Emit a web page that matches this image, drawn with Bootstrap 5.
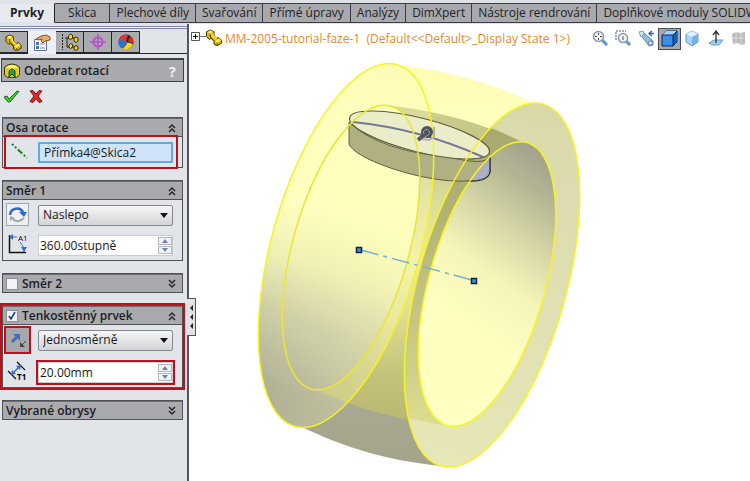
<!DOCTYPE html>
<html lang="cs">
<head>
<meta charset="utf-8">
<meta name="viewport" content="width=device-width, initial-scale=1">
<title>Odebrat rotací</title>
<link href="https://cdn.jsdelivr.net/npm/bootstrap@5.3.0/dist/css/bootstrap.min.css" rel="stylesheet">
<style>
body{font-family:"Noto Sans","Open Sans",sans-serif;font-size:12px;line-height:16px;color:#1c1c1e;background:#fff;min-height:100vh}
svg{display:block;flex:none}
button{padding:0;border:0;background:none;color:inherit}
.cmd-tabs{background:#dfe3e8;height:24px;padding-top:3px;overflow:hidden}
.cmd-tabs button{flex:none;height:20px;line-height:17px;padding:0 6px 2px;background:#a7a9ae;border:1px solid #3b3c42;border-width:1px 1px 1px 0;font-family:"Open Sans",sans-serif;color:#222}
.cmd-tabs .current{background:#e6eaee;border-color:#dfe3e8;border-right-color:#222;font-weight:700;padding:0 10px 2px}
.cmd-tabs .roomy{padding:0 13px 2px}
.side{width:189px;flex:none;background:#e1e5ea;border-right:2px solid #55575e;position:relative}
.rule{height:3px;margin-top:2px;border:1px solid #8288ad;border-width:1px 0;background:#f4f5fa}
.pm-tabs{margin-top:2px;border-bottom:1px solid #26272c;height:23px}
.pm-tabs button{width:28px;height:22px;background:#a9abaf;border:1px solid #26272c;border-left-width:0;display:flex;align-items:center;justify-content:center}
.pm-tabs .current{background:#edf1f5;height:23px;border-color:#edf1f5}
.bar{background:#a8aaae;border:1px solid #3e3f45;border-top-width:2px}
.title-bar{height:24px;margin:4px 3px 0 1px;padding:0 7px 0 2px;font-size:12px}
.title-bar .fw-semibold,.group-head{font-family:"Open Sans",sans-serif}
.help-mark{color:#eceef0;font-weight:700;font-size:15px}
.confirm{margin:7px 0 13px 3px;height:15px}
.group{width:181px;margin:0 0 12px 2px;border:1px solid #505157;background:#e1e5ea}
.group-head{height:19px;background:#a8aaae;border-bottom:1px solid #505157;border-top:1px solid #6c6d73;padding:0 6px 0 3px;font-weight:600;font-size:12px}
.group.shut .group-head{border-bottom:0;height:18px}
.line{padding:0 7px 0 35px;height:30px;position:relative}
.line .pic{position:absolute;left:3px;top:3px}
.field{height:21px;width:135px;border:1px solid #c9ccd0;background:#fff;padding:0 4px;font:12px/18px "Open Sans",sans-serif;color:#17181c;border-radius:0}
.picked{border:2px solid #62abdc;background:#cfe4f9}
.value{padding:0 1px}
.pick{position:relative;width:135px}
.pick select{appearance:none;border:1px solid #868a90;border-radius:2px;background:linear-gradient(#f6f6f7,#d3d4d6);width:100%}
.pick::after{content:"";position:absolute;right:5px;top:8px;border:4px solid transparent;border-top:5px solid #111;border-bottom:0;pointer-events:none}
.spin{position:relative}
.spin .arrows{position:absolute;right:1px;top:2px;display:grid;gap:1px}
.spin button{width:14px;height:8px;border:1px solid #b3b7bf;background:#eff1f3;display:grid;place-items:center}
.tick{appearance:none;width:12px;height:12px;margin:0;border:1px solid #8d9095;background:#f1f3f5;display:inline-block}
.tick:checked{background:#f1f3f5 url("data:image/svg+xml,%3Csvg xmlns='http://www.w3.org/2000/svg' viewBox='0 0 10 10'%3E%3Cpath d='M2 5l2 3 4-7' fill='none' stroke='%23283f86' stroke-width='1.6'/%3E%3C/svg%3E")}
.marked{outline:2px solid #b9121b}
.axis-line{height:30px;margin:0 6px 0 3px;padding-left:32px;z-index:1}
.tail{margin-top:2px}
.square{width:23px;height:23px;border:1px solid #a3a6ab;background:#eef0f3;display:grid;place-items:center}
.square.marked{background:#a6a8ac;border:0;height:24px}
.handle{position:absolute;left:187px;top:274px;width:9px;height:38px;background:#dfe2e6;border:1px solid #55575e;border-left:0;display:grid;place-items:center;z-index:2}
.tree{color:#e98a2a;font-family:"Open Sans",sans-serif;white-space:nowrap;padding-left:1px}
.view-head{height:31px;padding:0 0 2px 1px;min-width:0}
.views button{width:23px;height:22px;display:grid;place-items:center}
.views .current{background:#a5a7aa;border:1px solid #4b4d52}
.scene{width:100%;height:auto}
</style>
<script src="https://cdn.jsdelivr.net/npm/bootstrap@5.3.0/dist/js/bootstrap.bundle.min.js"></script>
</head>
<body class="d-flex flex-column overflow-hidden">
<svg width="0" height="0" class="position-absolute" aria-hidden="true">
  <defs>
    <symbol id="part" viewBox="0 0 18 18"><path d="M1 3l4-2 4 2v4l3 3 2-1 3 3v3l-5 3-3-2v-3l-3-3-2 1-3-3z" fill="#d9b400" stroke="#3b3200"/><path d="M2 3.500l3-2 3 1.500-3 2zM9.500 13l3 1.500 4-2.500-2-2-4 2.500z" fill="#ffee6a"/><path d="M6 5.500l2.500-1.500v3l4 3-2 1.500L6 7.500z" fill="#f7da2c"/><path d="M5 5.500v3l4.500 4.500M12.500 15v2.500" stroke="#4a3e00" fill="none"/></symbol>
    <symbol id="fold" viewBox="0 0 8 10"><path d="M1 5l3-3 3 3M1 9l3-3 3 3" fill="none" stroke="#222" stroke-width="1.4"/></symbol>
    <symbol id="unfold" viewBox="0 0 8 10"><path d="M1 1l3 3 3-3M1 5l3 3 3-3" fill="none" stroke="#222" stroke-width="1.4"/></symbol>
    <symbol id="up" viewBox="0 0 6 4"><path d="M0 4l3-4 3 4z" fill="#6f82b3"/></symbol>
    <symbol id="down" viewBox="0 0 6 4"><path d="M0 0l3 4 3-4z" fill="#6f82b3"/></symbol>
  </defs>
</svg>

<nav class="cmd-tabs d-flex" aria-label="Správce příkazů">
  <button type="button" class="current">Prvky</button><button type="button" class="roomy">Skica</button><button type="button">Plechové díly</button><button type="button">Svařování</button><button type="button">Přímé úpravy</button><button type="button">Analýzy</button><button type="button">DimXpert</button><button type="button">Nástroje rendrování</button><button type="button">Doplňkové moduly SOLIDWORKS</button>
</nav>

<div class="d-flex flex-grow-1">
<aside class="side">
  <div class="rule"></div>
  <div class="pm-tabs d-flex">
    <button type="button" aria-label="Strom"><svg width="17" height="17"><use href="#part"/></svg></button>
    <button type="button" class="current" aria-label="Vlastnosti"><svg width="18" height="18" viewBox="0 0 18 18"><path d="M1.500 5.500h12v11h-12z" fill="#fff" stroke="#5d6f96"/><path d="M3 8h3v3H3zM3 12h3v3H3z" fill="#4974bc"/><path d="M7 10h5M7 14h5" stroke="#889"/><path d="M3 5l5-3 5-1 4 2v3l-5 1-2 2-2-2 1-2-4 1z" fill="#e6ac70" stroke="#855021"/></svg></button>
    <button type="button" aria-label="Konfigurace"><svg width="18" height="18" viewBox="0 0 18 18"><path d="M1.500 1v16" stroke="#222" stroke-dasharray="2 1"/><path d="M4 5h4M6 5v9h3M10 5h4M11 14h3" stroke="#222" fill="none"/><path d="M7.500 2.500l2-1.500 2 1v3l-2 1.500-2-1zM13 5l2-1 2 1v3l-2 1.500-2-1.500zM8 12l1.500-1.500 2 1V14l-2 1.500-1.500-1zM13 14l2-1.500 2 1V16l-2 1.500-2-1z" fill="#f2d22c" stroke="#332b00"/></svg></button>
    <button type="button" aria-label="DimXpert"><svg width="16" height="16" viewBox="0 0 16 16"><circle cx="8" cy="8" r="4.500" fill="none" stroke="#b650cf" stroke-width="2"/><path d="M8 0v16M0 8h16" stroke="#b650cf" stroke-width="1.500"/></svg></button>
    <button type="button" aria-label="Vzhled"><svg width="16" height="16" viewBox="0 0 16 16"><circle cx="8" cy="8" r="7.500" fill="#222"/><path d="M1 6a7.500 7.500 0 0 1 9-5L8 8z" fill="#e23a2a"/><path d="M1 6a7.500 7.500 0 0 0 3 8.500q4-2 5-7-4-2-8-1.500z" fill="#2f6fd0"/><path d="M4 14.500q4-2 5-6 4 0 6 2a7.500 7.500 0 0 1-11 4z" fill="#f2d51a"/><path d="M12 2a7.500 7.500 0 0 1 3 8q-2-2-5-2.500z" fill="#d92b20"/></svg></button>
  </div>

  <div class="title-bar bar d-flex align-items-center gap-1">
    <svg width="16" height="15" viewBox="0 0 16 15"><path d="M.5 4q7.500-6 15 0v8l-3 2.500q-4 0-9 0L.5 12z" fill="#e8c81d" stroke="#3f3500"/><path d="M2 4q6-4 12 0-6 3-12 0" fill="#fff27c"/><path d="M5 14V8q3-4 6 0v6l-3-3z" fill="#29a144" stroke="#124d20"/></svg>
    <span class="fw-semibold">Odebrat rotací</span><button type="button" class="help-mark ms-auto">?</button>
  </div>
  <div class="confirm d-flex gap-2">
    <button type="button" aria-label="OK"><svg width="17" height="15" viewBox="0 0 17 15"><path d="M1 8l3-1 2 3 8-8 2 .500L7 13H5z" fill="#3fca36" stroke="#167415"/></svg></button>
    <button type="button" aria-label="Zrušit"><svg width="16" height="15" viewBox="0 0 16 15"><path d="M2 2l3-.500L8 5l3-3.500 3 .500-4 5 4 5.500-3 1L8 9.500l-3 4-3-1L6 7z" fill="#df2929" stroke="#8b1111"/></svg></button>
  </div>

  <section class="group">
    <div class="group-head d-flex align-items-center justify-content-between"><span>Osa rotace</span><svg width="8" height="10"><use href="#fold"/></svg></div>
    <div class="line axis-line marked d-flex align-items-center">
      <svg class="pic" width="20" height="22" viewBox="0 0 20 22"><path d="M3 4l15 14" stroke="#16801c" stroke-width="2" stroke-dasharray="2 2 2 2 6 2"/></svg>
      <input class="field picked" aria-label="Osa rotace" value="Přímka4@Skica2">
    </div>
  </section>

  <section class="group">
    <div class="group-head d-flex align-items-center justify-content-between"><span>Směr 1</span><svg width="8" height="10"><use href="#fold"/></svg></div>
    <div class="line d-flex align-items-center">
      <button type="button" class="square pic" aria-label="Obrátit směr"><svg width="19" height="19" viewBox="0 0 19 19"><path d="M2 10a7 7 0 0 1 13-3" fill="none" stroke="#2f68c6" stroke-width="2.500"/><path d="M11 7h8l-3 5z" fill="#2f68c6"/><path d="M5 14q5 5 11-1" fill="none" stroke="#a4a7ad" stroke-width="2"/><path d="M2 16v-5l5 2z" fill="#a4a7ad"/></svg></button>
      <div class="pick"><select class="field" aria-label="Typ rotace"><option>Naslepo</option></select></div>
    </div>
    <div class="line d-flex align-items-center">
      <svg class="pic" width="22" height="22" viewBox="0 0 22 22"><path d="M3.500 2v17.500H20" fill="none" stroke="#111" stroke-width="1.500"/><path d="M4 4h7M14 9q4 4 4 9" fill="none" stroke="#356dc7"/><path d="M3 4l4-3v6zM18 19l-3-5h6z" fill="#356dc7"/><text x="12" y="8" font-size="8" font-family="Open Sans">A1</text></svg>
      <div class="spin"><input class="field value" aria-label="Úhel" value="360.00stupně"><div class="arrows"><button type="button" aria-label="Více"><svg width="6" height="4"><use href="#up"/></svg></button><button type="button" aria-label="Méně"><svg width="6" height="4"><use href="#down"/></svg></button></div></div>
    </div>
  </section>

  <section class="group shut">
    <div class="group-head d-flex align-items-center"><input type="checkbox" class="tick" id="dir2"><label for="dir2" class="ms-1">Směr 2</label><svg class="ms-auto" width="8" height="10"><use href="#unfold"/></svg></div>
  </section>

  <section class="group marked">
    <div class="group-head d-flex align-items-center"><input type="checkbox" class="tick" id="thin" checked><label for="thin" class="ms-1">Tenkostěnný prvek</label><svg class="ms-auto" width="8" height="10"><use href="#fold"/></svg></div>
    <div class="line d-flex align-items-center">
      <button type="button" class="square marked pic" aria-label="Obrátit směr tloušťky"><svg width="18" height="18" viewBox="0 0 18 18"><path d="M3 11l5-5" stroke="#3d70b9" stroke-width="3"/><path d="M4 3h7v7z" fill="#3d70b9"/><path d="M17 10l-4 4" stroke="#444"/><path d="M11 11v5h5z" fill="#444"/></svg></button>
      <div class="pick"><select class="field" aria-label="Typ stěny"><option>Jednosměrně</option></select></div>
    </div>
    <div class="line tail d-flex align-items-center">
      <svg class="pic" width="23" height="24" viewBox="0 0 23 24"><path d="M2 11l8 8M11 2l8 8" stroke="#111" stroke-width="1.200"/><path d="M7 13l6-6" stroke="#356dc7" stroke-width="1.500"/><path d="M5 15l1-5 4 4zM15 5l-5 1 4 4z" fill="#356dc7"/><text x="11" y="20" font-size="8" font-weight="700" font-family="Open Sans">T1</text></svg>
      <div class="spin"><input class="field value marked" aria-label="Tloušťka" value="20.00mm"><div class="arrows"><button type="button" aria-label="Více"><svg width="6" height="4"><use href="#up"/></svg></button><button type="button" aria-label="Méně"><svg width="6" height="4"><use href="#down"/></svg></button></div></div>
    </div>
  </section>

  <section class="group shut">
    <div class="group-head d-flex align-items-center justify-content-between"><span>Vybrané obrysy</span><svg width="8" height="10"><use href="#unfold"/></svg></div>
  </section>
  <button type="button" class="handle" aria-label="Skrýt panel"><svg width="5" height="26" viewBox="0 0 5 26"><path d="M4 1v6L1 4zM4 10v6l-3-3zM4 19v6l-3-3z" fill="#222"/></svg></button>
</aside>

<main class="flex-grow-1 overflow-hidden">
  <div class="view-head d-flex align-items-center justify-content-between">
    <div class="tree d-flex align-items-center">
      <svg width="34" height="20" viewBox="0 0 34 20"><path d="M.5 3.500h8v8h-8z" fill="#fff" stroke="#555"/><path d="M2 7.500h5M4.500 5v5" stroke="#111"/><path d="M9 7.500h6" stroke="#777"/><use href="#part" x="14" width="18" height="17"/></svg>
      <a href="#" class="text-reset text-decoration-none">MM-2005-tutorial-faze-1 &nbsp;(Default&lt;&lt;Default&gt;_Display State 1&gt;)</a>
    </div>
    <div class="views d-flex">
      <button type="button" aria-label="Na celou obrazovku"><svg width="17" height="17" viewBox="0 0 17 17"><path d="M10 10l5 5" stroke="#5a93cf" stroke-width="3"/><circle cx="6.500" cy="6.500" r="5" fill="#eef4f9" stroke="#8d99a6" stroke-width="1.500"/><path d="M6.500 3v7M3 6.500h7" stroke="#444" stroke-dasharray="2 3"/></svg></button>
      <button type="button" aria-label="Oblast"><svg width="17" height="17" viewBox="0 0 17 17"><path d="M1 10V1h10" fill="none" stroke="#555" stroke-dasharray="2 1"/><path d="M11 11l4 4" stroke="#5a93cf" stroke-width="3"/><circle cx="8" cy="8" r="4.500" fill="#eef4f9" stroke="#8d99a6" stroke-width="1.500"/><path d="M8 6v4" stroke="#555"/></svg></button>
      <button type="button" aria-label="Předchozí pohled"><svg width="17" height="17" viewBox="0 0 17 17"><path d="M3 5l3-2 9 8v4l-4 1z" fill="#91bfe3" stroke="#5e87ab"/><path d="M1 2l4-1 1 3-3 3z" fill="#d5eafa" stroke="#7b9cb6"/><circle cx="12.500" cy="13" r="2" fill="#d5eafa" stroke="#5e87ab"/><path d="M16 3.500h-5m3-2.500l-3 2.500 3 2.500" fill="none" stroke="#2f68b6" stroke-width="1.500"/></svg></button>
      <button type="button" class="current" aria-label="Styl zobrazení"><svg width="17" height="17" viewBox="0 0 17 17"><path d="M1 5l4-4h11v11l-4 4H1z" fill="#3d8de5" stroke="#0d285d"/><path d="M1 5l4-4h11l-4 4z" fill="#a5d2ff"/><path d="M12 5l4-4v11l-4 4z" fill="#1a5dbd"/><path d="M1 5h11v11M12 5l4-4" fill="none" stroke="#0d285d"/></svg></button>
      <button type="button" aria-label="Orientace"><svg width="15" height="17" viewBox="0 0 15 17"><path d="M1 4l6-3 6 3v8l-6 4-6-4z" fill="#a9d3f5" stroke="#6598c3"/><path d="M1 4l6-3 6 3-6 3z" fill="#dff1ff"/><path d="M7 7l6-3v8l-6 4z" fill="#78b1e0"/></svg></button>
      <button type="button" aria-label="Kolmo k"><svg width="16" height="17" viewBox="0 0 16 17"><path d="M1 13l5-3h9l-4 5H4z" fill="#a4d0ee" stroke="#6b9dc1"/><path d="M8 13V2M5 5l3-4 3 4" fill="none" stroke="#333" stroke-width="1.300"/></svg></button>
      <button type="button" aria-label="Vzhled" disabled><svg width="15" height="16" viewBox="0 0 15 16"><path d="M1 3l4-2 4 1 5-1v12l-4 1-3-2-5 1z" fill="#bbb"/><path d="M5 1v12M10 2v12M1 7h13" stroke="#ddd"/></svg></button>
    </div>
  </div>
  <svg class="scene" viewBox="189 55 561 426" role="img" aria-label="Náhled rotačního dílu">
    <defs>
      <linearGradient id="hull" gradientUnits="userSpaceOnUse" x1="0" y1="64" x2="0" y2="467"><stop offset="0" stop-color="#fcfcb3"/><stop offset=".12" stop-color="#ffffbd"/><stop offset=".38" stop-color="#ffffbf"/><stop offset=".52" stop-color="#efefb4"/><stop offset=".67" stop-color="#c9c9a4"/><stop offset=".84" stop-color="#a9a992"/><stop offset="1" stop-color="#a4a48d"/></linearGradient>
      <linearGradient id="rim" gradientUnits="userSpaceOnUse" x1="270" y1="0" x2="420" y2="0"><stop offset="0" stop-color="#ffffc5" stop-opacity="0"/><stop offset="1" stop-color="#ffffbd" stop-opacity=".35"/></linearGradient>
      <linearGradient id="tube" gradientUnits="userSpaceOnUse" x1="0" y1="105" x2="0" y2="426"><stop offset="0" stop-color="#cfcf8f"/><stop offset=".12" stop-color="#c3c387"/><stop offset=".3" stop-color="#dcdc9a"/><stop offset=".5" stop-color="#eded9f"/><stop offset=".66" stop-color="#dede91"/><stop offset=".85" stop-color="#c2c278"/><stop offset="1" stop-color="#b7b773"/></linearGradient>
      <linearGradient id="hole" gradientUnits="userSpaceOnUse" x1="540" y1="155" x2="478" y2="330"><stop offset="0" stop-color="#a1a18e"/><stop offset=".2" stop-color="#b6b695"/><stop offset=".45" stop-color="#d8d8a8"/><stop offset=".7" stop-color="#f5f5ba"/><stop offset="1" stop-color="#ffffc2"/></linearGradient>
      <linearGradient id="face" gradientUnits="userSpaceOnUse" x1="0" y1="103" x2="0" y2="467"><stop offset="0" stop-color="#d9d9a8"/><stop offset=".2" stop-color="#dcdcb0"/><stop offset="1" stop-color="#e6e6b6"/></linearGradient>
      <linearGradient id="strip" gradientUnits="userSpaceOnUse" x1="0" y1="125" x2="0" y2="426"><stop offset="0" stop-color="#a8a870"/><stop offset=".25" stop-color="#b0b073"/><stop offset=".5" stop-color="#bfbf80"/><stop offset=".75" stop-color="#cccc85"/><stop offset="1" stop-color="#dcdc92"/></linearGradient>
      <clipPath id="in-hole"><ellipse cx="487" cy="284" rx="58" ry="147" transform="rotate(15.800 487 284)"/></clipPath>
      <clipPath id="in-face"><ellipse cx="492" cy="285" rx="74" ry="188" transform="rotate(15.800 492 285)"/></clipPath>
    </defs>
    <path d="M387 64C440 68 489 82 535 103L560 300 451 467C393 462 347 449 302 427L340 240z" fill="url(#hull)"/>
    <ellipse cx="346" cy="245.500" rx="74" ry="188" transform="rotate(15.800 346 245.500)" fill="url(#hull)"/>
    <path d="M384 105C434 110 479 122 520 141L440 240 454 426C403 422 359 409 317 390L350 240z" fill="url(#tube)"/>
    <ellipse cx="351" cy="247.500" rx="58" ry="147" transform="rotate(15.800 351 247.500)" fill="url(#hull)"/>
    <ellipse cx="346" cy="245.500" rx="74" ry="188" transform="rotate(15.800 346 245.500)" fill="url(#rim)"/>
    <ellipse cx="492" cy="285" rx="74" ry="188" transform="rotate(15.800 492 285)" fill="url(#face)"/>
    <path d="M440 115C475 120 500 131 520 141L480 280 454 426Q425 423 395 415z" fill="url(#strip)" clip-path="url(#in-face)"/>
    <ellipse cx="487" cy="284" rx="58" ry="147" transform="rotate(15.800 487 284)" fill="url(#hole)"/>
    <path d="M349 122v22C354 158 412 179 454 181Q488 182 490 172V157Q485 166 449 157Q379 151 349 122z" fill="#b0b082" stroke="#616142"/>
    <path d="M349 122v22C354 158 412 179 454 181Q488 182 490 172V157z" fill="#adadc9" clip-path="url(#in-hole)"/>
    <path d="M468 181Q488 182 490 172V157" fill="none" stroke="#222" stroke-width="1.200"/>
    <ellipse cx="419.500" cy="135" rx="72" ry="17" transform="rotate(14 419.500 135)" fill="#eaedc7" stroke="#5d5d3d" stroke-width="1.200"/>
    <path d="M353 122Q421 129 483 157" fill="none" stroke="#747894" stroke-width="2"/>
    <g fill="none" stroke="#f8f41d" stroke-width="1.500">
      <ellipse cx="346" cy="245.500" rx="74" ry="188" transform="rotate(15.800 346 245.500)"/>
      <ellipse cx="351" cy="247.500" rx="58" ry="147" transform="rotate(15.800 351 247.500)" stroke="#ebe632"/>
      <ellipse cx="492" cy="285" rx="74" ry="188" transform="rotate(15.800 492 285)"/>
      <ellipse cx="487" cy="284" rx="58" ry="147" transform="rotate(15.800 487 284)"/>
    </g>
    <path d="M434 127v10l-5 3-8-1" fill="none" stroke="#b0b0c2" stroke-width="2"/><path d="M418 140l6-5" stroke="#555765" stroke-width="4"/><circle cx="427" cy="132" r="6" fill="#4f515d"/><path d="M424 134a3 3 0 1 1 4 1l-3 2" fill="none" stroke="#a2a4b0"/>
    <path d="M361 250L472 280" stroke="#72b4c8" stroke-width="1.500" stroke-dasharray="18 5 4 5"/>
    <path d="M356.500 247.500h5v5h-5zM471.500 278.500h5v5h-5z" fill="#3f96e8" stroke="#12233a" stroke-width="1.500"/>
  </svg>
</main>
</div>
</body>
</html>
